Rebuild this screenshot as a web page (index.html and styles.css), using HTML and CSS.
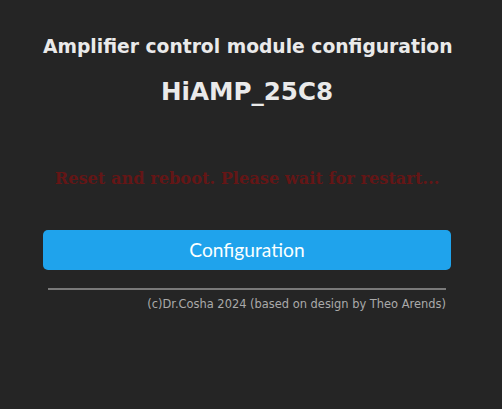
FILE: index.html
```html
<!DOCTYPE html>
<html>
<head>
<meta charset="utf-8">
<title>HiAMP_25C8</title>
<link rel="stylesheet" href="styles.css">
</head>
<body>
<div class="wrap">
  <div class="main">
    <h3 class="title">Amplifier control module configuration</h3>
    <h2 class="device">HiAMP_25C8</h2>
    <div class="msg">Reset and reboot. Please wait for restart...</div>
    <button class="btn" type="button">Configuration</button>
    <hr class="rule">
    <div class="foot">(c)Dr.Cosha 2024 (based on design by Theo Arends)</div>
  </div>
</div>
</body>
</html>
```
FILE: styles.css
```css
html, body {
  margin: 0;
  padding: 0;
  background: #252525;
}
body {
  color: #eaeaea;
  font-family: "DejaVu Sans", Verdana, sans-serif;
}
.wrap {
  display: flex;
  justify-content: center;
  padding: 36px 8px 0 0;
}
.main {
  width: 408px;
  display: flex;
  flex-direction: column;
}
.title {
  margin: 0;
  font-size: 18.72px;
  line-height: 22px;
  font-weight: bold;
  text-align: center;
  white-space: nowrap;
}
.device {
  margin: 19px 0 0;
  font-size: 24.6px;
  line-height: 30px;
  font-weight: bold;
  text-align: center;
}
.msg {
  margin: 61px 0 0;
  font-family: "DejaVu Serif", "Liberation Serif", serif;
  font-size: 16.2px;
  line-height: 22px;
  font-weight: bold;
  color: #641616;
  text-align: center;
  white-space: nowrap;
}
.btn {
  margin: 40px 0 0;
  height: 40px;
  border: 0;
  border-radius: 5px;
  background: #1fa3ec;
  color: #faffff;
  font-family: Lato, "Open Sans", sans-serif;
  font-size: 19.2px;
  line-height: 40px;
  padding: 0 0 2px;
}
.rule {
  margin: 18px 5px 0;
  height: 0;
  border: 0;
  border-top: 2px solid #7a7a7a;
}
.foot {
  margin: 7px 5px 0 0;
  font-size: 11.45px;
  line-height: 14px;
  color: #aaaaaa;
  text-align: right;
}
```
